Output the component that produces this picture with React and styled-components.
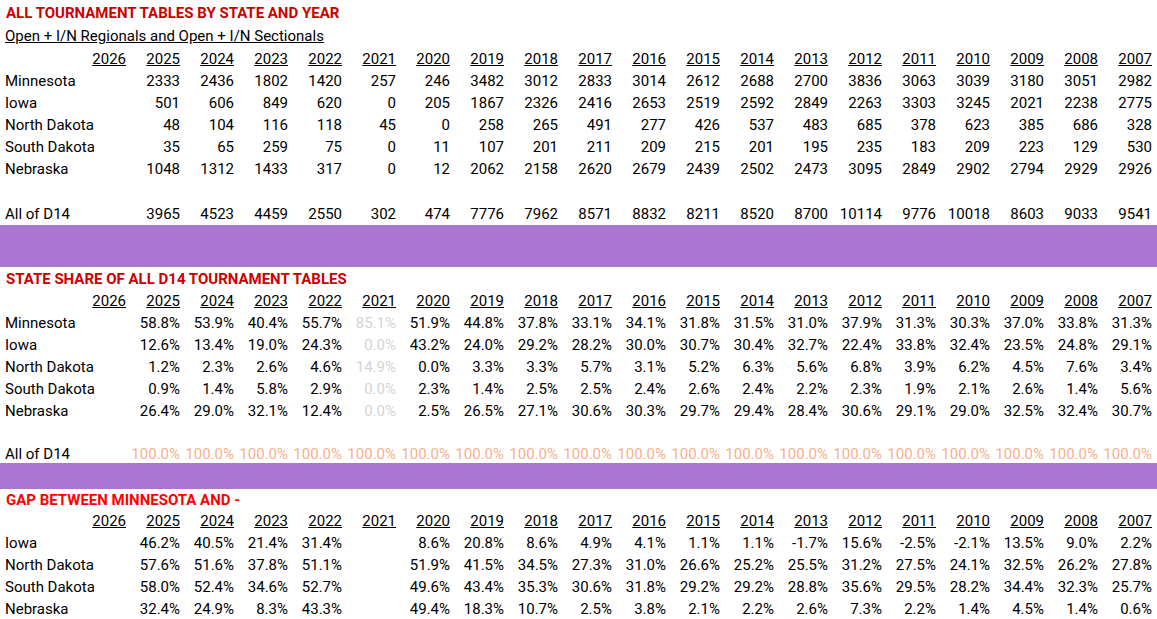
import React from 'react';
import styled, { createGlobalStyle } from 'styled-components';

const GlobalStyle = createGlobalStyle`
  html, body {
    margin: 0;
    padding: 0;
    background: #fff;
  }
  body {
    font-family: 'Roboto', 'Liberation Sans', sans-serif;
    font-size: 15px;
    color: #000;
  }
`;

const Sheet = styled.div`
  width: 1157px;
  display: flex;
  flex-direction: column;
`;

const Title = styled.div`
  height: ${p => p.$h || 22}px;
  display: flex;
  align-items: center;
  padding-left: 6px;
  padding-top: 1px;
  box-sizing: border-box;
  font-weight: 700;
  font-size: 15px;
  color: ${p => p.$color || '#cc0000'};
  white-space: nowrap;
`;

const Subtitle = styled.div`
  height: 23px;
  display: flex;
  align-items: center;
  padding-left: 5px;
  padding-top: 1px;
  box-sizing: border-box;
  text-decoration: underline;
  white-space: nowrap;
`;

const Row = styled.div`
  height: ${p => p.$h || 22}px;
  padding-top: 1px;
  box-sizing: border-box;
  display: grid;
  grid-template-columns: 75px repeat(20, 54px);
  align-items: center;
`;

const Label = styled.div`
  padding-left: 5px;
  white-space: nowrap;
  overflow: visible;
`;

const Cell = styled.div`
  text-align: right;
  padding-right: 3px;
  white-space: nowrap;
  color: ${p => p.$color || '#000'};
  text-decoration: ${p => (p.$underline ? 'underline' : 'none')};
`;

const Band = styled.div`
  height: ${p => p.$h}px;
  background: #a977d1;
`;

const YEARS = [2026, 2025, 2024, 2023, 2022, 2021, 2020, 2019, 2018, 2017, 2016, 2015, 2014, 2013, 2012, 2011, 2010, 2009, 2008, 2007];

const tables = [
  ['Minnesota', '', 2333, 2436, 1802, 1420, 257, 246, 3482, 3012, 2833, 3014, 2612, 2688, 2700, 3836, 3063, 3039, 3180, 3051, 2982],
  ['Iowa', '', 501, 606, 849, 620, 0, 205, 1867, 2326, 2416, 2653, 2519, 2592, 2849, 2263, 3303, 3245, 2021, 2238, 2775],
  ['North Dakota', '', 48, 104, 116, 118, 45, 0, 258, 265, 491, 277, 426, 537, 483, 685, 378, 623, 385, 686, 328],
  ['South Dakota', '', 35, 65, 259, 75, 0, 11, 107, 201, 211, 209, 215, 201, 195, 235, 183, 209, 223, 129, 530],
  ['Nebraska', '', 1048, 1312, 1433, 317, 0, 12, 2062, 2158, 2620, 2679, 2439, 2502, 2473, 3095, 2849, 2902, 2794, 2929, 2926],
];
const tablesTotal = ['All of D14', '', 3965, 4523, 4459, 2550, 302, 474, 7776, 7962, 8571, 8832, 8211, 8520, 8700, 10114, 9776, 10018, 8603, 9033, 9541];

const share = [
  ['Minnesota', '', '58.8', '53.9', '40.4', '55.7', '85.1', '51.9', '44.8', '37.8', '33.1', '34.1', '31.8', '31.5', '31.0', '37.9', '31.3', '30.3', '37.0', '33.8', '31.3'],
  ['Iowa', '', '12.6', '13.4', '19.0', '24.3', '0.0', '43.2', '24.0', '29.2', '28.2', '30.0', '30.7', '30.4', '32.7', '22.4', '33.8', '32.4', '23.5', '24.8', '29.1'],
  ['North Dakota', '', '1.2', '2.3', '2.6', '4.6', '14.9', '0.0', '3.3', '3.3', '5.7', '3.1', '5.2', '6.3', '5.6', '6.8', '3.9', '6.2', '4.5', '7.6', '3.4'],
  ['South Dakota', '', '0.9', '1.4', '5.8', '2.9', '0.0', '2.3', '1.4', '2.5', '2.5', '2.4', '2.6', '2.4', '2.2', '2.3', '1.9', '2.1', '2.6', '1.4', '5.6'],
  ['Nebraska', '', '26.4', '29.0', '32.1', '12.4', '0.0', '2.5', '26.5', '27.1', '30.6', '30.3', '29.7', '29.4', '28.4', '30.6', '29.1', '29.0', '32.5', '32.4', '30.7'],
];

const gap = [
  ['Iowa', '', '46.2', '40.5', '21.4', '31.4', '', '8.6', '20.8', '8.6', '4.9', '4.1', '1.1', '1.1', '-1.7', '15.6', '-2.5', '-2.1', '13.5', '9.0', '2.2'],
  ['North Dakota', '', '57.6', '51.6', '37.8', '51.1', '', '51.9', '41.5', '34.5', '27.3', '31.0', '26.6', '25.2', '25.5', '31.2', '27.5', '24.1', '32.5', '26.2', '27.8'],
  ['South Dakota', '', '58.0', '52.4', '34.6', '52.7', '', '49.6', '43.4', '35.3', '30.6', '31.8', '29.2', '29.2', '28.8', '35.6', '29.5', '28.2', '34.4', '32.3', '25.7'],
  ['Nebraska', '', '32.4', '24.9', '8.3', '43.3', '', '49.4', '18.3', '10.7', '2.5', '3.8', '2.1', '2.2', '2.6', '7.3', '2.2', '1.4', '4.5', '1.4', '0.6'],
];

const GREY = '#d4d4d4';
const PEACH = '#f6b08c';

const HeaderRow = () => (
  <Row>
    <Label />
    {YEARS.map(y => (
      <Cell key={y} $underline>{y}</Cell>
    ))}
  </Row>
);

const DataRow = ({ row, pct, colorFor, h }) => (
  <Row $h={h}>
    <Label>{row[0]}</Label>
    {row.slice(1).map((v, i) => (
      <Cell key={i} $color={colorFor ? colorFor(i) : undefined}>
        {v === '' ? '' : pct ? `${v}%` : v}
      </Cell>
    ))}
  </Row>
);

const is2021 = i => (YEARS[i] === 2021 ? GREY : undefined);

export default function App() {
  const totalShare = ['All of D14', '', ...YEARS.slice(1).map(() => '100.0')];

  return (
    <Sheet>
      <GlobalStyle />

      <Title $h={24}>ALL TOURNAMENT TABLES BY STATE AND YEAR</Title>
      <Subtitle>Open + I/N Regionals and Open + I/N Sectionals</Subtitle>
      <HeaderRow />
      {tables.map(r => <DataRow key={r[0]} row={r} />)}
      <Row />
      <DataRow row={tablesTotal} h={24} />
      <Band $h={42} />

      <Title>STATE SHARE OF ALL D14 TOURNAMENT TABLES</Title>
      <HeaderRow />
      {share.map(r => <DataRow key={r[0]} row={r} pct colorFor={is2021} />)}
      <Row />
      <DataRow row={totalShare} pct h={20} colorFor={() => PEACH} />
      <Band $h={26} />

      <Title $h={20} $color="#ff0000">GAP BETWEEN MINNESOTA AND -</Title>
      <HeaderRow />
      {gap.map(r => <DataRow key={r[0]} row={r} pct />)}
    </Sheet>
  );
}
